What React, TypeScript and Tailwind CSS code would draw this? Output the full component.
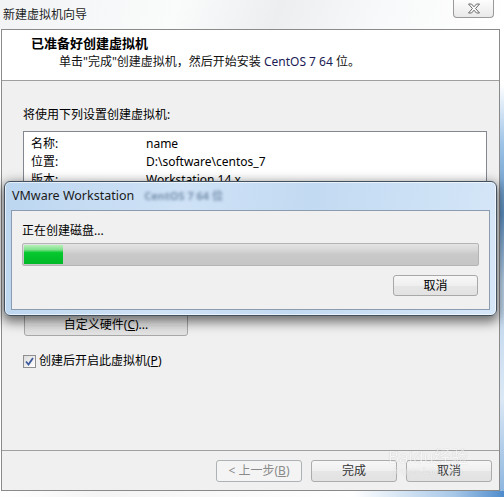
import React from 'react'

const font = "font-['Noto_Sans','Noto_Sans_CJK_SC',sans-serif]"

const rows: [string, string][] = [
  ['名称:', 'name'],
  ['位置:', 'D:\\software\\centos_7'],
  ['版本:', 'Workstation 14.x'],
]

function WinButton({ children, disabled, className = '' }: { children: React.ReactNode; disabled?: boolean; className?: string }) {
  return (
    <div
      className={`flex items-center justify-center rounded-[3px] border text-[12px] ${
        disabled
          ? 'border-[#adb2b5] bg-[#f4f4f4] text-[#8a8a8a]'
          : 'border-[#a8a8a8] bg-[linear-gradient(#f7f7f7_0%,#efefef_50%,#e6e6e6_51%,#e2e2e2_100%)] text-[#333]'
      } ${className}`}
    >
      {children}
    </div>
  )
}

function CloseGlyph() {
  return (
    <svg width="14" height="11" viewBox="0 0 14 11">
      <path
        d="M1.5 1 H4.5 L7 3.8 L9.5 1 H12.5 L8.6 5.5 L12.5 10 H9.5 L7 7.2 L4.5 10 H1.5 L5.4 5.5 Z"
        fill="#fafafa"
        stroke="#6b6b6b"
        strokeWidth="1"
        strokeLinejoin="round"
      />
    </svg>
  )
}

function ProgressDialog() {
  return (
    <div className="absolute left-[4px] top-[181px] flex h-[135px] w-[493px] flex-col rounded-[6px] border border-[#43505e] bg-[linear-gradient(100deg,#bcd6f0_0%,#cfe2f6_35%,#c2daf2_60%,#d6e7f8_100%)] shadow-[0_4px_12px_2px_rgba(0,0,0,0.55),inset_0_0_0_1px_rgba(255,255,255,0.6)]">
      <div className="flex h-[28px] items-center pl-[7px]">
        <span className="text-[12.5px] text-[#1a1a1a]">VMware Workstation</span>
        <span className="ml-[10px] text-[11px] font-bold text-[#7891ae] blur-[1.4px]">CentOS 7 64 位</span>
      </div>
      <div className="ml-[6px] flex h-[100px] w-[479px] flex-col border border-[#8b9bb0] bg-[#f0f0f0] pl-[10px] pr-[10px] pt-[12px]">
        <div className="h-[16px] text-[12px] leading-[16px] text-black">正在创建磁盘...</div>
        <div className="mt-[4px] h-[23px] rounded-[2px] border border-[#b4b4b4] bg-[linear-gradient(#e4e4e4_0%,#d6d6d6_30%,#c9c9c9_50%,#c6c6c6_100%)] p-[1px]">
          <div className="h-full w-[39px] bg-[linear-gradient(#b7f0b9_0%,#7fe08a_25%,#06c82e_40%,#00b826_100%)]" />
        </div>
        <WinButton className="mt-[9px] mr-[1px] h-[21px] w-[85px] self-end border-[#707070] bg-[linear-gradient(#f2f2f2_0%,#ebebeb_50%,#dddddd_51%,#cfcfcf_100%)] text-black">
          取消
        </WinButton>
      </div>
    </div>
  )
}

export default function App() {
  return (
    <div className={`relative flex h-[497px] w-[504px] flex-col overflow-hidden bg-white ${font}`}>
      {/* title bar */}
      <div className="relative flex h-[29px] items-center bg-[linear-gradient(110deg,#f1f3f5_0%,#fafbfb_35%,#eceef0_55%,#f8f9fa_75%,#ffffff_100%)] pl-[3px]">
        <span className="text-[12px] text-[#1e1e1e]">新建虚拟机向导</span>
        <div className="absolute right-[10px] top-0 flex h-[18px] w-[41px] items-center justify-center rounded-b-[4px] border border-t-0 border-[#9a9a9a] bg-[linear-gradient(#fdfdfd,#e9e9e9)]">
          <CloseGlyph />
        </div>
      </div>

      <div className="flex flex-1">
        <div className="w-[1px] bg-white" />
        {/* wizard frame */}
        <div className="flex h-[462px] w-[499px] flex-col border border-[#8a8a8a] bg-[#f0f0f0]">
          <div className="flex h-[51px] flex-col border-b border-[#a0a0a0] bg-white pl-[29px] pt-[5px]">
            <div className="h-[17px] text-[13px] font-bold leading-[17px] text-black">已准备好创建虚拟机</div>
            <div className="ml-[28px] mt-[2px] h-[16px] text-[12px] leading-[16px] text-[#111]">
              单击"完成"创建虚拟机，然后开始安装 <span className="text-[#1c1c55]">CentOS 7 64</span> 位。
            </div>
          </div>

          <div className="flex flex-1 flex-col pl-[21px] pt-[26px]">
            <div className="h-[16px] text-[12px] leading-[16px] text-black">将使用下列设置创建虚拟机:</div>
            <div className="mt-[8px] flex h-[172px] w-[464px] flex-col overflow-hidden border border-[#828790] bg-white pl-[7px] pt-[3px]">
              {rows.map(([k, v]) => (
                <div key={k} className="flex h-[18px] items-center text-[12px] text-black">
                  <span className="w-[115px]">{k}</span>
                  <span>{v}</span>
                </div>
              ))}
            </div>
            <WinButton className="ml-[1px] mt-[10px] h-[23px] w-[164px] border-[#707070] bg-[linear-gradient(#f2f2f2_0%,#ebebeb_50%,#dddddd_51%,#cfcfcf_100%)] text-black">
              自定义硬件(<span className="underline">C</span>)...
            </WinButton>
            <div className="mt-[17px] flex h-[16px] items-center">
              <div className="flex h-[13px] w-[13px] items-center justify-center border border-[#8f8f8f] bg-[linear-gradient(135deg,#dcdcdc,#ffffff)]">
                <svg width="9" height="9" viewBox="0 0 9 9">
                  <path d="M1 4.5 L3.5 7.5 L8 1" fill="none" stroke="#3d5a9c" strokeWidth="1.8" />
                </svg>
              </div>
              <span className="ml-[3px] text-[12px] text-black">
                创建后开启此虚拟机(<span className="underline">P</span>)
              </span>
            </div>
          </div>

          <div className="flex h-[40px] justify-end gap-[9px] border-t border-[#a0a0a0] pr-[7px] pt-[9px]">
            <WinButton disabled className="h-[22px] w-[86px]">
              &lt; 上一步(<span className="underline">B</span>)
            </WinButton>
            <WinButton className="h-[22px] w-[86px] border-[#acacac] bg-[#f2f2f2]">完成</WinButton>
            <WinButton className="h-[22px] w-[86px] border-[#acacac] bg-[#f2f2f2]">取消</WinButton>
          </div>
        </div>
        <div className="flex-1 bg-[linear-gradient(#ffffff_0%,#ffffff_12%,#9cc2e6_25%,#5e8fc0_40%,#bcd4ec_55%,#dbe8f5_80%,#8db6df_100%)]" />
      </div>
      <div className="h-[6px] bg-[linear-gradient(90deg,#ffffff_0%,#f4f4f4_20%,#ffffff_70%,#a8c8e8_90%,#4f8ccc_100%)]" />

      <ProgressDialog />

      {/* watermark */}
      <div className="pointer-events-none absolute left-[388px] top-[448px] flex flex-col items-center opacity-45">
        <span className="text-[17px] leading-[18px] text-white [text-shadow:0_0_1px_#7a7a7a]">Baidu经验</span>
        <span className="text-[8px] leading-[9px] text-white [text-shadow:0_0_1px_#8a8a8a]">jingyan.baidu.com</span>
      </div>
    </div>
  )
}
